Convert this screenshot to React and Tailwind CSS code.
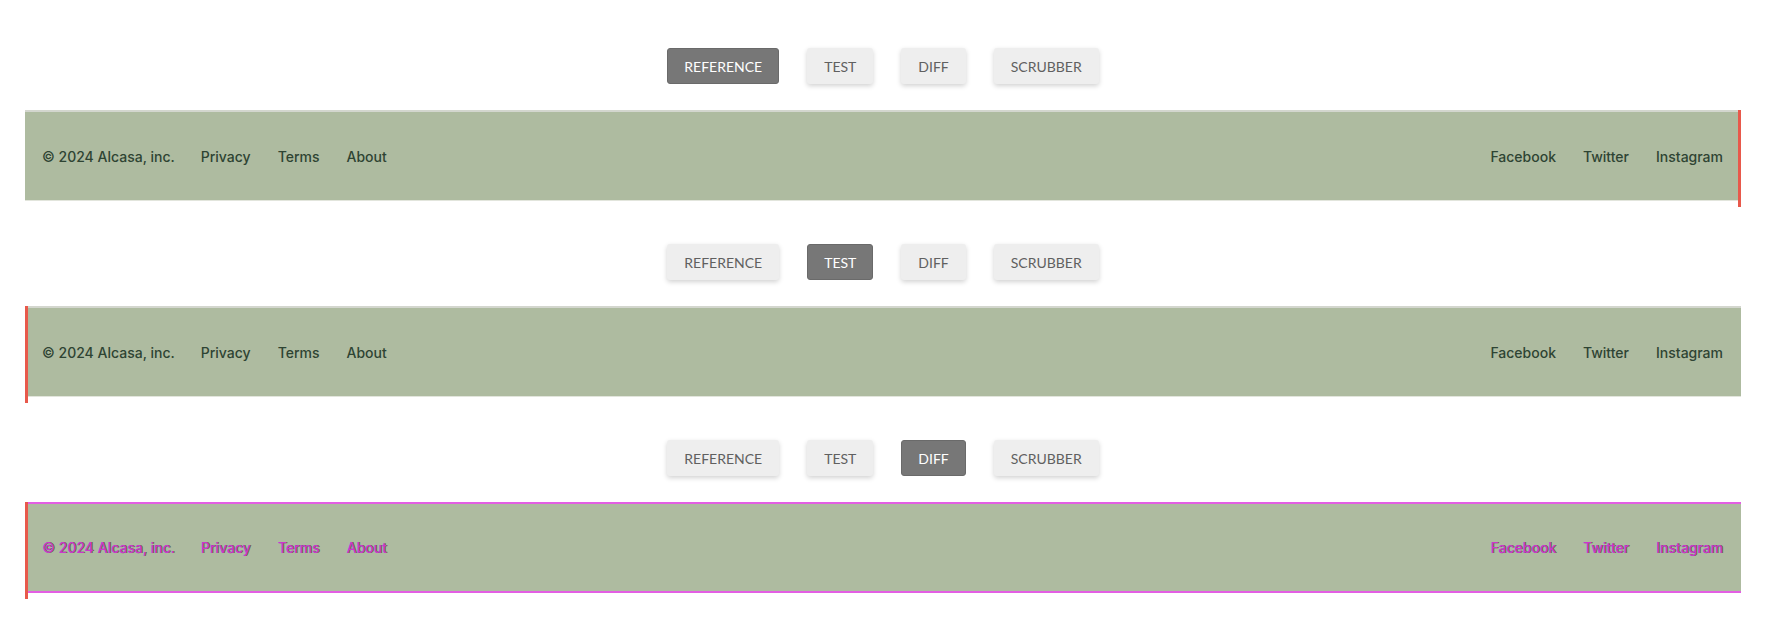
import React from 'react';

const tabs = ['Reference', 'Test', 'Diff', 'Scrubber'];
const leftLinks = ['Privacy', 'Terms', 'About'];
const rightLinks = ['Facebook', 'Twitter', 'Instagram'];

function Tabs({ active }) {
  return (
    <div className="flex justify-center gap-[28px] h-9">
      {tabs.map((t) => (
        <button
          key={t}
          className={
            t === active
              ? 'h-9 px-[16px] rounded-[3px] bg-[#777777] border border-[#6a6a6a] text-white text-[14px] uppercase'
              : 'h-9 px-[17px] rounded-[3px] bg-[#eeeeee] text-[#606060] text-[14px] uppercase shadow-[0_2px_5px_rgba(0,0,0,0.18)]'
          }
          style={{ fontFamily: 'Lato, "Open Sans", sans-serif' }}
        >
          {t}
        </button>
      ))}
    </div>
  );
}

function Footer({ diff }) {
  const text = diff
    ? 'text-[#cc36cf] [text-shadow:1px_0_0_rgba(45,60,45,0.7)]'
    : 'text-[#2e4433]';
  return (
    <footer
      className={
        'h-[91px] bg-[#aebba0] flex items-center justify-between pl-[17px] pr-[18px] text-[14px] font-medium ' +
        (diff ? 'border-y-2 border-[#e35ee3]' : 'border-t-2 border-t-[#d3d6ce] border-b border-b-[#e2e5dc]')
      }
      style={{ fontFamily: 'Inter, "Noto Sans", sans-serif' }}
    >
      <div className={'flex items-center gap-[26px] ' + text}>
        <span>© 2024 Alcasa, inc.</span>
        {leftLinks.map((l) => (
          <a key={l} href="#" className="mr-[1px]">
            {l}
          </a>
        ))}
      </div>
      <div className={'flex items-center gap-[27px] ' + text}>
        {rightLinks.map((l) => (
          <a key={l} href="#">
            {l}
          </a>
        ))}
      </div>
    </footer>
  );
}

function Section({ active, side, diff }) {
  return (
    <div className="flex flex-col">
      <Tabs active={active} />
      <div className="relative mt-[26px] h-[97px]">
        <Footer diff={diff} />
        <span
          className={
            'absolute top-0 bottom-0 w-[3px] bg-[#e8594b] ' + (side === 'right' ? 'right-0' : 'left-0')
          }
        />
      </div>
    </div>
  );
}

export default function App() {
  return (
    <div className="bg-white min-h-[642px] pt-[48px]">
      <div className="ml-[25px] w-[1716px] flex flex-col gap-[37px]">
        <Section active="Reference" side="right" />
        <Section active="Test" side="left" />
        <Section active="Diff" side="left" diff />
      </div>
    </div>
  );
}
